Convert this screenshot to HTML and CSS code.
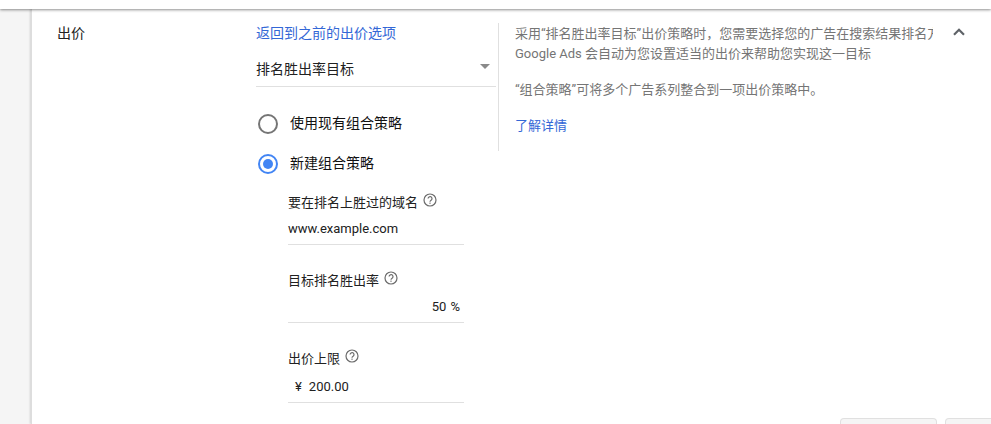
FILE: index.html
```html
<!DOCTYPE html>
<html lang="zh-CN">
<head>
<meta charset="utf-8">
<title>出价</title>
<link rel="stylesheet" href="styles.css">
</head>
<body>
<div class="topbar"></div>
<div class="main">
  <div class="gutter"></div>
  <section class="card">
    <h2 class="section-label">出价</h2>
    <div class="form">
      <a class="link back-link" href="#">返回到之前的出价选项</a>
      <div class="select">
        <span>排名胜出率目标</span>
        <span class="caret"></span>
      </div>
      <div class="radio-row first">
        <span class="radio"></span>
        <span class="radio-label">使用现有组合策略</span>
      </div>
      <div class="radio-row second">
        <span class="radio checked"></span>
        <span class="radio-label">新建组合策略</span>
      </div>
      <div class="fields">
        <div class="field">
          <div class="field-label">要在排名上胜过的域名
            <svg class="help-icon" viewBox="0 0 14 14" width="14" height="14"><circle cx="7" cy="7" r="6" fill="none" stroke="#6b6b6b" stroke-width="1.2"/><path d="M5.1 5.6a1.95 1.95 0 1 1 3 1.6c-.7.45-1.1.8-1.1 1.6" fill="none" stroke="#6b6b6b" stroke-width="1.2"/><rect x="6.4" y="9.6" width="1.2" height="1.2" fill="#6b6b6b"/></svg>
          </div>
          <div class="field-input">www.example.com</div>
        </div>
        <div class="field">
          <div class="field-label">目标排名胜出率
            <svg class="help-icon" viewBox="0 0 14 14" width="14" height="14"><circle cx="7" cy="7" r="6" fill="none" stroke="#6b6b6b" stroke-width="1.2"/><path d="M5.1 5.6a1.95 1.95 0 1 1 3 1.6c-.7.45-1.1.8-1.1 1.6" fill="none" stroke="#6b6b6b" stroke-width="1.2"/><rect x="6.4" y="9.6" width="1.2" height="1.2" fill="#6b6b6b"/></svg>
          </div>
          <div class="field-input right">50 %</div>
        </div>
        <div class="field">
          <div class="field-label">出价上限
            <svg class="help-icon" viewBox="0 0 14 14" width="14" height="14"><circle cx="7" cy="7" r="6" fill="none" stroke="#6b6b6b" stroke-width="1.2"/><path d="M5.1 5.6a1.95 1.95 0 1 1 3 1.6c-.7.45-1.1.8-1.1 1.6" fill="none" stroke="#6b6b6b" stroke-width="1.2"/><rect x="6.4" y="9.6" width="1.2" height="1.2" fill="#6b6b6b"/></svg>
          </div>
          <div class="field-input money"><span class="currency">¥</span><span>200.00</span></div>
        </div>
      </div>
    </div>
    <div class="side">
      <div class="side-top">
        <aside class="help">
          <p class="help-line">采用“排名胜出率目标”出价策略时，您需要选择您的广告在搜索结果排名方面要胜过的域名，</p>
          <p class="help-line">Google Ads 会自动为您设置适当的出价来帮助您实现这一目标</p>
          <p class="help-line gap">“组合策略”可将多个广告系列整合到一项出价策略中。</p>
          <a class="link learn" href="#">了解详情</a>
        </aside>
        <svg class="chevron" viewBox="0 0 12 8" width="12" height="8"><path d="M1 6.8 6 1.8l5 5" fill="none" stroke="#5f6368" stroke-width="2.2"/></svg>
      </div>
      <div class="actions">
        <span class="btn"></span>
        <span class="btn"></span>
      </div>
    </div>
  </section>
</div>
</body>
</html>
```
FILE: styles.css
```css
html, body {
  margin: 0;
  height: 424px;
  overflow: hidden;
  background: #fff;
}
body {
  font-family: Roboto, "Noto Sans CJK SC", sans-serif;
  font-size: 13px;
  color: #212121;
}
.topbar {
  position: relative;
  z-index: 2;
  height: 9px;
  background: #fff;
  box-shadow: 0 1px 3px rgba(0, 0, 0, .45);
}
.main {
  display: flex;
  height: 415px;
  overflow: hidden;
}
.gutter {
  width: 31px;
  flex: none;
  background: #f5f5f5;
}
.card {
  flex: 1;
  min-width: 0;
  display: flex;
  background: #fff;
  border-left: 1px solid #ddd;
  box-shadow: -1px 0 2px rgba(0, 0, 0, .15);
  padding-left: 25px;
}
.section-label {
  width: 199px;
  flex: none;
  margin: 15px 0 0;
  font-size: 14px;
  font-weight: 400;
  line-height: 19px;
}
.form {
  width: 240px;
  flex: none;
  display: flex;
  flex-direction: column;
}
.link {
  color: #3367d6;
  text-decoration: none;
}
.back-link {
  margin-top: 15px;
  font-size: 14px;
  line-height: 19px;
}
.select {
  display: flex;
  justify-content: space-between;
  align-items: center;
  height: 33px;
  margin-top: 8px;
  padding: 0 6px 2px 0;
  border-bottom: 1px solid #e0e0e0;
  font-size: 14px;
  color: #212121;
}
.caret {
  width: 0;
  height: 0;
  border-left: 5px solid transparent;
  border-right: 5px solid transparent;
  border-top: 5px solid #8a8a8a;
  margin-bottom: 2px;
}
.radio-row {
  display: flex;
  align-items: flex-start;
  gap: 12px;
  height: 20px;
  padding-left: 2px;
}
.radio-row.first { margin-top: 27px; }
.radio-row.second { margin-top: 20px; }
.radio {
  box-sizing: border-box;
  width: 20px;
  height: 20px;
  border: 2px solid #757575;
  border-radius: 50%;
  flex: none;
  position: relative;
}
.radio.checked {
  border-color: #4285f4;
}
.radio.checked::after {
  content: "";
  position: absolute;
  inset: 3px;
  border-radius: 50%;
  background: #4285f4;
}
.radio-label {
  font-size: 14px;
  line-height: 18px;
  color: #111;
}
.fields {
  display: flex;
  flex-direction: column;
  gap: 26px;
  margin: 19px 0 0 32px;
  width: 176px;
}
.field-label {
  display: flex;
  align-items: flex-start;
  gap: 5px;
  height: 20px;
  line-height: 20px;
  color: #212121;
}
.help-icon {
  flex: none;
}
.field-input {
  height: 31px;
  line-height: 32px;
  border-bottom: 1px solid #e0e0e0;
  color: #212121;
}
.field-input.right {
  text-align: right;
  padding-right: 4px;
  word-spacing: 1px;
}
.field-input.money {
  display: flex;
  gap: 7px;
  margin-top: 2px;
  padding-left: 7px;
}
.side {
  flex: 1;
  min-width: 0;
  display: flex;
  flex-direction: column;
}
.side-top {
  display: flex;
  align-items: flex-start;
  height: 128px;
  margin: 14px 0 0 2px;
}
.help {
  box-sizing: border-box;
  width: 435px;
  height: 128px;
  flex: none;
  overflow: hidden;
  border-left: 1px solid #e0e0e0;
  padding: 1px 0 0 16px;
  color: #757575;
}
.help-line {
  margin: 0;
  line-height: 20px;
  white-space: nowrap;
}
.help-line.gap {
  margin-top: 16px;
}
.learn {
  display: block;
  margin-top: 16px;
  line-height: 20px;
}
.chevron {
  margin: 5px 0 0 20px;
  flex: none;
}
.actions {
  display: flex;
  gap: 8px;
  margin: 267px 0 0 344px;
}
.btn {
  box-sizing: border-box;
  width: 97px;
  height: 6px;
  flex: none;
  background: #f5f5f5;
  border: 1px solid #e0e0e0;
  border-bottom: 0;
  border-radius: 4px 4px 0 0;
}
```
